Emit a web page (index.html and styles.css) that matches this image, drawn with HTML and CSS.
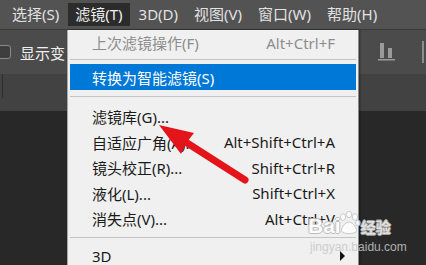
FILE: index.html
```html
<!DOCTYPE html>
<html lang="zh-CN">
<head>
    <meta charset="UTF-8">
    <title>滤镜</title>
    <link rel="stylesheet" href="styles.css">
</head>
<body>
<div class="app">
    <ul class="menubar">
        <li>选择(S)</li>
        <li class="active">滤镜(T)</li>
        <li>3D(D)</li>
        <li>视图(V)</li>
        <li>窗口(W)</li>
        <li>帮助(H)</li>
    </ul>
    <div class="optbar">
        <span class="check"></span>
        <span class="optlabel">显示变</span>
        <div class="optright">
            <svg class="align-icon" width="18" height="18" viewBox="0 0 18 18">
                <rect x="2" y="0" width="4" height="15" fill="#9a9a9a"/>
                <rect x="10" y="5" width="4" height="10" fill="#9a9a9a"/>
                <rect x="0" y="16" width="17" height="1.5" fill="#9a9a9a"/>
            </svg>
            <span class="vline"></span>
        </div>
    </div>
    <div class="tabbar"><span class="tabsep"></span></div>
    <div class="canvas"></div>
</div>

<div class="dropdown">
    <div class="item disabled"><span>上次滤镜操作(F)</span><span class="key">Alt+Ctrl+F</span></div>
    <div class="sep s1"></div>
    <div class="item hl"><span>转换为智能滤镜(S)</span></div>
    <div class="sep s2"></div>
    <div class="item"><span>滤镜库(G)...</span></div>
    <div class="item"><span>自适应广角(A)...</span><span class="key">Alt+Shift+Ctrl+A</span></div>
    <div class="item"><span>镜头校正(R)...</span><span class="key">Shift+Ctrl+R</span></div>
    <div class="item"><span>液化(L)...</span><span class="key">Shift+Ctrl+X</span></div>
    <div class="item"><span>消失点(V)...</span><span class="key">Alt+Ctrl+V</span></div>
    <div class="sep s3"></div>
    <div class="item last"><span>3D</span><span class="sub"></span></div>
</div>

<svg class="arrow" width="426" height="265" viewBox="0 0 426 265">
    <line x1="184" y1="141" x2="245" y2="180" stroke="#e3141a" stroke-width="7" stroke-linecap="round"/>
    <polygon points="159,125 194,133 187,142 181,154" fill="#e3141a"/>
</svg>

<div class="watermark">
    <div class="wm-top">
        <span class="wm-bai">Bai</span>
        <svg class="paw" width="24" height="24" viewBox="0 0 24 24">
            <g fill="#ffffff" stroke="#b4b4b4" stroke-width="0.8">
                <ellipse cx="6" cy="6" rx="2.6" ry="3.4"/>
                <ellipse cx="12" cy="3.5" rx="2.6" ry="3.3"/>
                <ellipse cx="18" cy="6" rx="2.6" ry="3.4"/>
                <ellipse cx="21" cy="12" rx="2.4" ry="3"/>
                <path d="M5 21 C3 18 8 11 12 11 C16 11 21 18 19 21 C17 23 7 23 5 21 Z"/>
            </g>
        </svg>
        <span class="wm-jy">经验</span>
    </div>
    <div class="wm-url">jingyan.baidu.com</div>
</div>
</body>
</html>
```

FILE: styles.css
```css
body,div,ul,li,span {
    margin: 0;
    padding: 0;
}
ul,li {
    list-style: none;
}

body {
    width: 426px;
    height: 265px;
    overflow: hidden;
    background: #282828;
    font-family: "Noto Sans", "Noto Sans CJK SC", sans-serif;
    font-size: 15px;
}

.app {
    display: flex;
    flex-direction: column;
    height: 265px;
}

.menubar {
    display: flex;
    align-items: center;
    height: 30px;
    padding-left: 5px;
    background: #535353;
    color: #e2e2e2;
    border-bottom: 1px solid #3a3a3a;
    box-sizing: border-box;
}

.menubar li {
    height: 23px;
    line-height: 23px;
    padding: 0 7px;
    margin-right: 2px;
}

.menubar .active {
    background: #2c2c2c;
    color: #f0f0f0;
}

.optbar {
    display: flex;
    align-items: center;
    height: 44px;
    background: #4b4b4b;
}

.check {
    width: 12px;
    height: 12px;
    margin-left: -3px;
    border: 1px solid #8a8a8a;
    border-radius: 3px;
    background: #3e3e3e;
}

.optlabel {
    margin-left: 9px;
    color: #efefef;
}

.optright {
    display: flex;
    align-items: center;
    margin-left: auto;
}

.align-icon {
    margin-right: 26px;
}

.vline {
    width: 2px;
    height: 22px;
    margin-right: 2px;
    background: #8c8c8c;
}

.tabbar {
    height: 37px;
    background: #424242;
}

.tabsep {
    display: block;
    width: 1px;
    height: 24px;
    margin-left: 2px;
    background: #2e2e2e;
}

.canvas {
    flex: 1;
    background: #282828;
}

/* dropdown menu */
.dropdown {
    position: absolute;
    left: 67px;
    top: 30px;
    width: 286px;
    height: 235px;
    overflow: hidden;
    padding: 0 2px;
    background: #f0f0f0;
    border-left: 1px solid #a8a8a8;
    border-right: 1px solid #8a8a8a;
    box-shadow: 1px 0 2px rgba(0,0,0,0.4);
    color: #1a1a1a;
}

.item {
    display: flex;
    align-items: center;
    justify-content: space-between;
    height: 25.5px;
    padding: 0 21px 0 22px;
    white-space: nowrap;
}

.item.disabled {
    height: 25px;
    color: #8d8d8d;
}

.item.hl {
    height: 26px;
    background: #0078d7;
    color: #ffffff;
}

.item.last {
    height: 21px;
    line-height: 21px;
}

.sep {
    height: 1px;
    background: #c4c4c4;
}

.s1 {
    margin: 4px 0;
}

.s2 {
    margin: 6px 0 7px;
}

.s3 {
    margin: 5px 0 8px;
}

.sub {
    width: 0;
    height: 0;
    margin-right: -10px;
    border-top: 5px solid transparent;
    border-bottom: 5px solid transparent;
    border-left: 5px solid #111111;
}

.arrow {
    position: absolute;
    left: 0;
    top: 0;
}

.watermark {
    position: absolute;
    left: 308px;
    top: 211px;
    color: #ffffff;
    opacity: 0.85;
    text-shadow: 1px 0 0 #b4b4b4, -1px 0 0 #b4b4b4, 0 1px 0 #b4b4b4, 0 -1px 0 #b4b4b4;
}

.wm-top {
    display: flex;
    align-items: flex-end;
    height: 26px;
}

.wm-bai {
    font-family: "Liberation Sans", sans-serif;
    font-size: 21px;
    font-weight: bold;
    line-height: 22px;
}

.paw {
    margin-left: -4px;
    margin-bottom: 2px;
}

.wm-jy {
    font-size: 15px;
    font-weight: bold;
    line-height: 20px;
}

.wm-url {
    font-family: "Liberation Sans", sans-serif;
    font-size: 12px;
    line-height: 14px;
    margin-left: 2px;
    margin-top: 3px;
    text-shadow: none;
    color: #c8c8c8;
}
```
